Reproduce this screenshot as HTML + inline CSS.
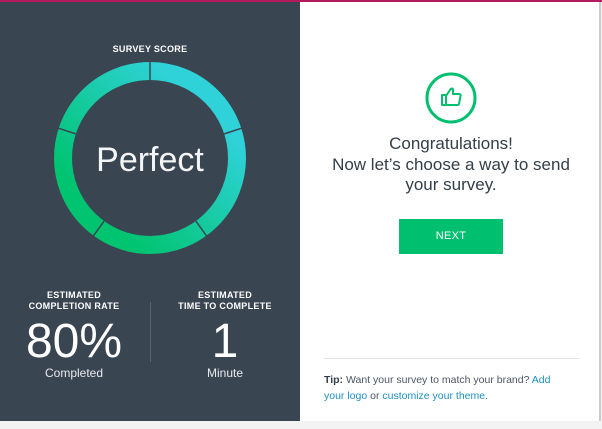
<!DOCTYPE html>
<html><head><meta charset="utf-8"><style>
body{margin:0;width:602px;height:429px;background:#f3f3f3;position:relative;overflow:hidden;font-family:"Liberation Sans",sans-serif}
.top{position:absolute;left:0;top:0;width:602px;height:2px;background:#b5195e}
.left{position:absolute;left:0;top:2px;width:300px;height:419px;background:#3a4552;color:#fff}
.right{position:absolute;left:300px;top:2px;width:299px;height:419px;background:#fff}
.edge{position:absolute;left:599px;top:2px;width:2px;height:419px;background:#ccc}
.lbl{position:absolute;font-size:9px;font-weight:bold;text-align:center;line-height:11px;letter-spacing:0.3px}
.big{position:absolute;font-size:48px;font-weight:300;text-align:center;line-height:48px}
.sub{position:absolute;font-size:12px;text-align:center;color:#e8eaec}
</style></head><body>
<div class="top"></div>
<div class="left">
<div class="lbl" style="left:0;width:300px;top:42px">SURVEY SCORE</div>
<svg style="position:absolute;left:0;top:-2px" width="300" height="320">
<defs><linearGradient id="g" x1="0" y1="1" x2="1" y2="0"><stop offset="0.2" stop-color="#00c470"/><stop offset="0.8" stop-color="#2fd2d8"/></linearGradient></defs>
<circle cx="150" cy="158" r="87" fill="none" stroke="url(#g)" stroke-width="18"/>
<g stroke="#3a4552" stroke-width="1.5">
<line x1="150" y1="60" x2="150" y2="80"/>
<line x1="150" y1="60" x2="150" y2="80" transform="rotate(72 150 158)"/>
<line x1="150" y1="60" x2="150" y2="80" transform="rotate(144 150 158)"/>
<line x1="150" y1="60" x2="150" y2="80" transform="rotate(216 150 158)"/>
<line x1="150" y1="60" x2="150" y2="80" transform="rotate(288 150 158)"/>
</g>
<text x="150" y="171" text-anchor="middle" fill="#f4f5f6" font-family="Liberation Sans" font-size="34" font-weight="300">Perfect</text>
</svg>
<div class="lbl" style="left:0;width:148px;top:288px">ESTIMATED<br>COMPLETION RATE</div>
<div class="lbl" style="left:150px;width:150px;top:288px">ESTIMATED<br>TIME TO COMPLETE</div>
<div style="position:absolute;left:150px;top:300px;width:1px;height:60px;background:#5b6570"></div>
<div class="big" style="left:0;width:148px;top:316px">80%</div>
<div class="big" style="left:150px;width:150px;top:316px">1</div>
<div class="sub" style="left:0;width:148px;top:364px">Completed</div>
<div class="sub" style="left:150px;width:150px;top:364px">Minute</div>
</div>
<div class="right">
<svg style="position:absolute;left:124px;top:70px" width="54" height="54">
<circle cx="27" cy="26" r="24" fill="none" stroke="#00bf6f" stroke-width="3"/>
<path d="M18 23h4v10h-4z M22 24l4-6c1-2 3-2 3 0v4h6c1.5 0 2 1 1.5 2l-1.5 8c-.3 1-1 1-2 1H22" fill="none" stroke="#00bf6f" stroke-width="2" stroke-linejoin="round"/>
</svg>
<div style="position:absolute;left:0;width:302px;top:132px;text-align:center;font-size:17px;line-height:20.5px;color:#333e48;font-weight:300">Congratulations!<br>Now let’s choose a way to send<br>your survey.</div>
<div style="position:absolute;left:99px;top:217px;width:104px;height:35px;background:#00bf6f;color:#fff;font-size:11px;text-align:center;line-height:35px;letter-spacing:0.3px">NEXT</div>
<div style="position:absolute;left:24px;top:356px;width:255px;height:1px;background:#e3e3e3"></div>
<div style="position:absolute;left:24px;top:370px;width:240px;font-size:10.5px;line-height:16px;color:#4b5561">
<b style="color:#333e48">Tip:</b> Want your survey to match your brand? <span style="color:#1e8fc2">Add your logo</span> or <span style="color:#1e8fc2">customize your theme</span>.</div>
</div>
<div class="edge"></div>
</body></html>
